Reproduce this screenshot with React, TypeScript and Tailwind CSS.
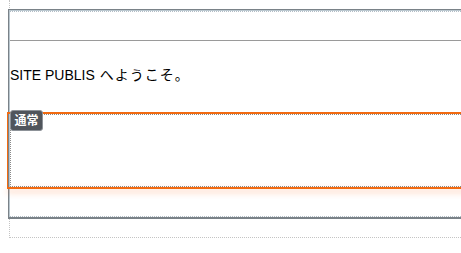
export default function App() {
  return (
    <div
      className="relative h-[253px] w-[461px] overflow-hidden bg-white pl-[9px]"
      style={{ fontFamily: '"Liberation Sans", "Noto Sans CJK JP", sans-serif' }}
    >
      {/* outer dotted wrapper */}
      <div className="flex h-[238px] w-[560px] flex-col border-b border-l border-dotted border-[#c4c4c4] pt-[9px]">
        {/* editable area frame */}
        <div className="-ml-[2px] flex flex-col border-b-2 border-l border-t border-[#7a8288]">
          <div className="flex flex-col border-l border-t border-[#b9c6ce]">
            <div className="h-[30px] border-b border-t border-dotted border-t-[#b3bec6] border-b-[#9a9a9a] [border-bottom-style:solid]" />

            <div className="flex h-[71px] items-center pb-[3px] text-[14px] leading-[20px] text-black">
              <span>SITE PUBLIS</span>
              <span className="ml-[5px] tracking-[1px]">へようこそ。</span>
            </div>

            {/* selected block */}
            <div className="relative flex h-[77px] flex-col py-[2px]">
              <div className="flex-1 border border-dotted border-[#8a8a8a]" />
              <div className="pointer-events-none absolute -left-[3px] right-0 top-0 h-[77px] border-l border-t-2 border-[#f26a10]" />
              <div className="pointer-events-none absolute -left-[3px] right-0 bottom-0 h-[2px] bg-[#f26a10] shadow-[0_3px_6px_rgba(255,100,20,0.45)]" />
              <div className="absolute -top-[2px] left-0 flex h-[21px] w-[33px] items-center justify-center rounded-[3px] border border-[#8d9298] bg-[#50555c] text-[12px] font-bold text-white">
                通常
              </div>
            </div>

            <div className="h-[28px] border-b border-dotted border-[#b3bec6]" />
          </div>
        </div>
      </div>
    </div>
  );
}
